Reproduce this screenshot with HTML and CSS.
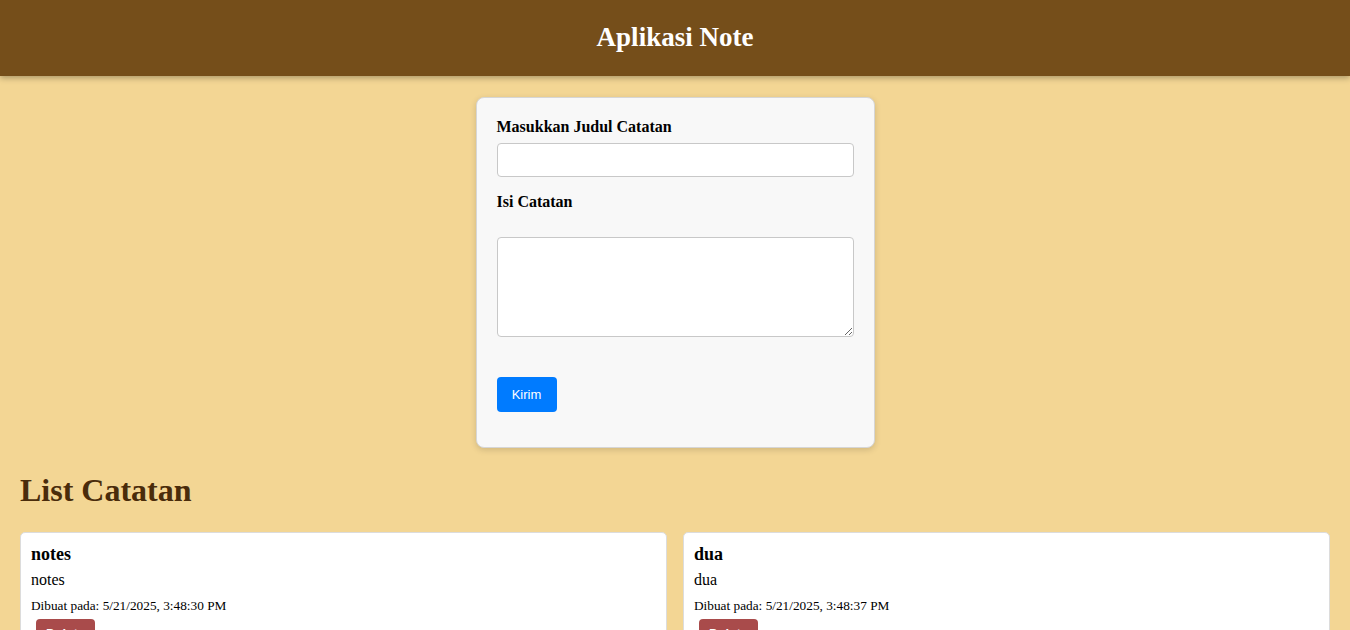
FILE: index.html
```html
<!DOCTYPE html>
<html lang="id">
<head>
<meta charset="utf-8">
<title>Aplikasi Note</title>
<link rel="stylesheet" href="styles.css">
</head>
<body>
<header class="topbar">
  <h1 class="topbar-title">Aplikasi Note</h1>
</header>
<main class="main">
  <form class="note-form">
    <label class="form-label" for="judul">Masukkan Judul Catatan</label>
    <input class="form-input" id="judul" type="text">
    <label class="form-label label-isi" for="isi">Isi Catatan</label>
    <textarea class="form-textarea" id="isi"></textarea>
    <button class="btn-submit" type="button">Kirim</button>
  </form>
  <h2 class="list-title">List Catatan</h2>
  <div class="note-grid">
    <div class="note-card">
      <h3 class="note-title">notes</h3>
      <p class="note-body">notes</p>
      <p class="note-date">Dibuat pada: 5/21/2025, 3:48:30 PM</p>
      <button class="btn-delete" type="button">Delete</button>
    </div>
    <div class="note-card">
      <h3 class="note-title">dua</h3>
      <p class="note-body">dua</p>
      <p class="note-date">Dibuat pada: 5/21/2025, 3:48:37 PM</p>
      <button class="btn-delete" type="button">Delete</button>
    </div>
  </div>
</main>
</body>
</html>
```
FILE: styles.css
```css
html, body {
  margin: 0;
  padding: 0;
}
body {
  background: #f3d694;
  font-family: "Liberation Serif", "Times New Roman", serif;
  color: #000;
  overflow: hidden;
}
.topbar {
  height: 76px;
  background: #754e1a;
  display: flex;
  align-items: center;
  justify-content: center;
  box-shadow: 0 2px 6px rgba(0, 0, 0, 0.3);
}
.topbar-title {
  margin: 0 0 2px;
  color: #fff;
  font-size: 27px;
  font-weight: bold;
}
.main {
  padding: 21px 20px 0;
}
.note-form {
  box-sizing: border-box;
  width: 399px;
  margin: 0 auto;
  background: #f8f8f8;
  border: 1px solid #d6d6d6;
  border-radius: 8px;
  box-shadow: 0 2px 6px rgba(0, 0, 0, 0.15);
  padding: 20px 20px 35px;
  display: flex;
  flex-direction: column;
  align-items: flex-start;
}
.form-label {
  font-size: 16px;
  font-weight: bold;
  line-height: 18px;
  margin-bottom: 7px;
}
.label-isi {
  margin-bottom: 26px;
}
.form-input {
  box-sizing: border-box;
  width: 100%;
  height: 34px;
  border: 1px solid #c8c8c8;
  border-radius: 4px;
  background: #fff;
  margin: 0 0 16px;
  padding: 6px 8px;
  font-size: 14px;
}
.form-textarea {
  box-sizing: border-box;
  width: 100%;
  height: 100px;
  border: 1px solid #c8c8c8;
  border-radius: 4px;
  background: #fff;
  margin: 0 0 40px;
  padding: 6px 8px;
  font-size: 14px;
  resize: vertical;
}
.btn-submit {
  width: 60px;
  height: 35px;
  border: none;
  border-radius: 4px;
  background: #007bff;
  color: #fff;
  font-family: "Liberation Sans", Arial, sans-serif;
  font-size: 13px;
  padding: 0;
}
.list-title {
  margin: 24px 0 23px;
  font-size: 32px;
  line-height: 37px;
  font-weight: bold;
  color: #4a2c0b;
}
.note-grid {
  display: grid;
  grid-template-columns: 1fr 1fr;
  gap: 16px;
}
.note-card {
  background: #fff;
  border: 1px solid #dcdcdc;
  border-radius: 5px;
  padding: 11px 10px 10px;
}
.note-title {
  margin: 0 0 6px;
  font-size: 18px;
  line-height: 21px;
  font-weight: bold;
}
.note-body {
  margin: 0 0 9px;
  font-size: 16px;
  line-height: 18px;
}
.note-date {
  margin: 0 0 5px;
  font-size: 13.3px;
  line-height: 16px;
}
.btn-delete {
  margin-left: 5px;
  height: 28px;
  padding: 0 10px;
  border: none;
  border-radius: 4px;
  background: #a94b4b;
  color: #fff;
  font-family: "Liberation Sans", Arial, sans-serif;
  font-size: 13px;
  font-weight: bold;
}
```
